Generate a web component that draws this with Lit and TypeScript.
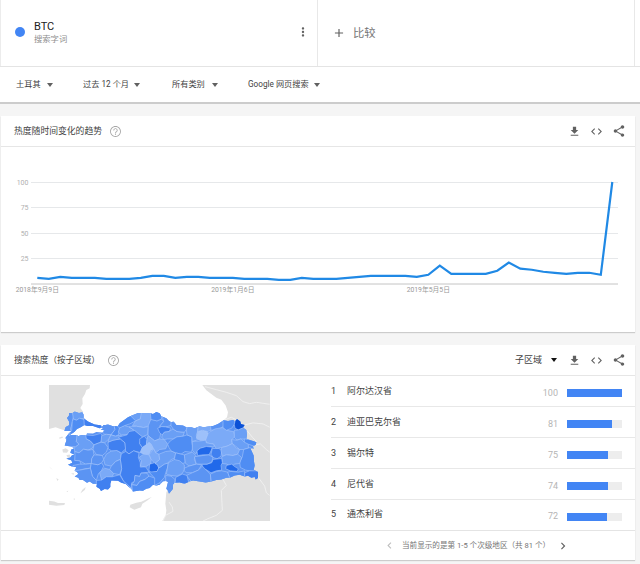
import { customElement, property } from "lit/decorators.js";
import { html, css, svg, LitElement } from "lit";

type Region = { name: string; value: number };
type Province = [fill: string, points: string];

const TREND: number[] = [
  6, 5, 7, 6, 6, 6, 5, 5, 5, 6, 8, 8, 6, 7, 7, 6, 6, 6, 5, 5, 5, 4, 4, 6, 5, 5, 5, 6, 7, 8, 8, 8, 8, 7, 9, 18, 10, 10,
  10, 10, 13, 21, 15, 14, 12, 11, 10, 11, 11, 9, 100,
];

const REGIONS: Region[] = [
  { name: "阿尔达汉省", value: 100 },
  { name: "迪亚巴克尔省", value: 81 },
  { name: "锡尔特", value: 75 },
  { name: "尼代省", value: 74 },
  { name: "通杰利省", value: 72 },
];

const ICONS = {
  download: "M19 9h-4V3H9v6H5l7 7 7-7zM5 18v2h14v-2H5z",
  code: "M9.4 16.6L4.8 12l4.6-4.6L8 6l-6 6 6 6 1.4-1.4zm5.2 0l4.6-4.6-4.6-4.6L16 6l6 6-6 6-1.4-1.4z",
  share:
    "M18 16.08c-.76 0-1.44.3-1.96.77L8.91 12.7c.05-.23.09-.46.09-.7s-.04-.47-.09-.7l7.05-4.11c.54.5 1.25.81 2.04.81 1.66 0 3-1.34 3-3s-1.34-3-3-3-3 1.34-3 3c0 .24.04.47.09.7L8.04 9.81C7.5 9.31 6.79 9 6 9c-1.66 0-3 1.34-3 3s1.34 3 3 3c.79 0 1.5-.31 2.04-.81l7.12 4.16c-.05.21-.08.43-.08.65 0 1.61 1.31 2.92 2.92 2.92s2.92-1.31 2.92-2.92-1.31-2.92-2.92-2.92z",
  help: "M11 18h2v-2h-2v2zm1-16C6.48 2 2 6.48 2 12s4.48 10 10 10 10-4.48 10-10S17.52 2 12 2zm0 18.4c-4.6 0-8.4-3.8-8.4-8.4S7.4 3.6 12 3.6s8.4 3.8 8.4 8.4-3.8 8.4-8.4 8.4zm0-14.4c-2.21 0-4 1.79-4 4h1.6c0-1.3 1.1-2.4 2.4-2.4s2.4 1.1 2.4 2.4c0 2-3.2 1.75-3.2 5h1.6c0-2.25 3.2-2.5 3.2-5 0-2.21-1.79-4-4-4z",
  more: "M12 8c1.1 0 2-.9 2-2s-.9-2-2-2-2 .9-2 2 .9 2 2 2zm0 2c-1.1 0-2 .9-2 2s.9 2 2 2 2-.9 2-2-.9-2-2-2zm0 6c-1.1 0-2 .9-2 2s.9 2 2 2 2-.9 2-2-.9-2-2-2z",
  add: "M19 13h-6v6h-2v-6H5v-2h6V5h2v6h6v2z",
  left: "M15.41 7.41L14 6l-6 6 6 6 1.41-1.41L10.83 12z",
  right: "M10 6L8.59 7.41 13.17 12l-4.58 4.59L10 18l6-6z",
};

const COUNTRY =
  "M190 150L205 147 218 151 235 152 240 143 265 125 280 118 295 112 315 112 330 112 340 115 350 109 360 113 365 122 380 128 388 136 395 140 402 138 410 148 420 149 430 150 440 155 455 155 465 158 480 152 492 155 505 153 520 151 535 145 552 134 565 136 580 133 586 137 592 130 602 138 604 145 615 148 610 156 620 163 622 178 620 190 635 195 650 200 648 208 640 212 643 220 632 218 642 240 643 258 645 270 642 283 655 290 655 308 648 312 645 305 635 307 625 301 615 303 600 298 585 300 572 306 560 307 545 312 530 314 515 318 498 321 480 318 460 315 448 319 435 325 420 321 405 322 400 327 400 340 388 355 385 346 380 340 385 320 379 317 370 318 360 328 350 330 340 328 330 338 320 340 310 346 300 345 280 348 275 340 268 335 258 326 245 322 235 316 215 315 212 325 212 335 205 342 195 341 184 347 180 340 170 334 172 325 160 325 150 318 142 322 130 314 120 314 116 307 105 303 116 296 112 290 105 286 110 275 95 272 85 268 98 262 95 254 80 250 92 246 97 239 105 238 92 232 95 222 105 218 95 213 75 210 80 196 80 185 95 178 112 178 115 182 125 178 140 179 142 173 160 174 170 169 188 171 195 165 183 162 190 159ZM88 112L98 113 105 108 118 112 128 110 133 120 132 128 145 138 165 147 182 149 192 155 180 158 160 151 143 151 134 148 123 155 112 160 104 169 90 178 76 190 88 173 96 166 74 166 78 154 88 149 88 138 82 127 88 120Z";

const PALE = "#9dc0fa";
const LIGHT = "#7baaf7";
const SOFT = "#6a9ff5";
const MID = "#5b94f3";
const BASE = "#4f8df3";
const STRONG = "#4080f0";
const DEEP = "#2169ea";
const TOP = "#0b51d6";

const PROVINCES: Province[] = [
  [MID, "70,105 98,108 102,122 98,138 95,152 92,160 96,170 70,195"],
  [SOFT, "98,105 138,105 134,130 120,128 110,134 101,130"],
  [BASE, "98,138 101,130 110,134 120,128 134,132 137,155 70,195 96,165"],
  [STRONG, "132,115 200,145 190,162 134,153"],
  [MID, "70,175 112,176 114,188 110,198 118,206 108,214 70,215"],
  [SOFT, "112,176 142,178 140,190 152,196 163,208 158,218 145,224 132,221 118,232 104,228 95,215 108,214 118,206 110,198"],
  [STRONG, "138,178 160,180 182,174 188,180 184,200 172,204 163,208 152,196 140,190"],
  [MID, "190,140 222,145 226,162 214,178 195,176 182,164"],
  [BASE, "222,145 240,145 241,162 236,178 228,182 214,178 226,162"],
  [SOFT, "186,180 200,176 214,178 208,190 195,202 184,200"],
  [MID, "163,208 184,200 195,202 205,216 200,230 188,240 170,237 160,222"],
  [MID, "104,228 118,232 132,221 145,224 160,222 163,238 156,250 155,264 138,266 120,256 105,255"],
  [BASE, "70,212 104,216 106,238 105,255 120,256 125,268 95,275 70,275"],
  [MID, "100,270 120,266 138,266 155,264 152,278 135,280 120,284 100,290"],
  [BASE, "155,264 175,268 186,262 192,272 185,286 176,295 170,315 158,302 152,278"],
  [MID, "95,286 120,284 152,278 158,302 170,315 175,335 100,330"],
  [MID, "163,238 188,240 192,252 186,262 175,268 155,264 156,250"],
  [SOFT, "192,252 200,236 216,226 232,225 245,234 242,252 228,258 215,272 196,268"],
  [STRONG, "205,200 220,194 242,190 256,202 258,220 245,232 232,225 216,226 206,220"],
  [SOFT, "214,178 228,182 245,178 242,190 220,194 205,200 208,190"],
  [SOFT, "240,155 255,150 268,154 285,165 264,177 245,178 236,170"],
  [BASE, "230,150 245,133 270,118 290,122 288,136 270,145 255,150 240,157"],
  [SOFT, "270,118 290,108 310,110 302,130 288,136"],
  [LIGHT, "288,136 302,130 305,110 334,108 338,132 330,150 312,156 290,152 278,150"],
  [SOFT, "268,154 290,152 312,156 326,153 324,177 308,184 285,165"],
  [STRONG, "236,185 262,178 268,168 285,165 308,184 304,192 300,204 308,216 302,231 282,226 268,235 258,228 256,202 242,190"],
  [STRONG, "245,235 258,228 268,235 282,226 298,232 296,246 302,262 302,275 318,274 328,290 304,293 300,303 286,300 284,318 276,322 274,338 252,318 242,298 246,280 242,252"],
  [LIGHT, "180,292 194,278 210,282 222,294 218,304 200,304 186,314"],
  [MID, "210,282 215,272 228,258 242,252 246,280 240,298 222,294"],
  [STRONG, "170,315 186,314 200,304 218,304 240,298 252,318 274,338 284,355 170,355"],
  [MID, "284,318 286,300 300,303 304,293 322,293 328,302 316,312 300,318 292,330 276,328"],
  [BASE, "276,328 292,330 300,318 316,312 328,302 345,308 360,320 365,340 280,358"],
  [MID, "326,150 334,130 352,136 366,130 372,138 360,152 364,168 360,190 345,196 325,180"],
  [STRONG, "300,190 314,182 322,192 320,208 308,216 300,204"],
  [PALE, "308,216 320,208 328,200 335,206 342,220 333,226 328,238 312,236 302,231"],
  [LIGHT, "325,180 345,196 360,190 374,192 384,206 378,220 360,222 348,232 342,220 335,206 328,200 320,208 322,192"],
  [LIGHT, "328,238 342,220 348,232 358,236 360,252 346,264 334,252"],
  [LIGHT, "298,246 312,236 328,238 334,252 334,264 318,274 302,272 306,256"],
  [DEEP, "330,266 344,262 354,268 357,278 352,288 334,292 328,284"],
  [BASE, "328,290 352,288 357,278 374,266 386,262 384,276 378,292 374,306 360,322 345,330 345,308"],
  [SOFT, "358,236 378,228 394,226 408,232 406,246 390,256 386,262 374,266 357,278 354,268 346,264 360,252"],
  [BASE, "334,132 332,112 350,104 366,116 366,130 352,136"],
  [MID, "366,114 398,136 394,150 378,154 360,152 372,138"],
  [STRONG, "354,158 366,153 378,154 394,158 388,168 374,170 368,178 360,172"],
  [SOFT, "368,178 374,170 388,168 400,160 412,168 434,170 430,182 412,184 400,190 384,190 374,192 366,186"],
  [BASE, "384,206 392,196 412,184 430,182 442,178 458,184 456,198 460,218 454,230 436,228 424,236 408,232 394,226 388,216"],
  [MID, "394,136 418,145 444,148 440,162 434,170 412,168 400,160 394,150"],
  [SOFT, "444,150 476,150 474,166 470,180 476,192 458,198 456,184 442,178 440,162"],
  [PALE, "474,168 488,164 504,168 506,178 498,194 484,196 470,188"],
  [LIGHT, "476,148 515,148 514,164 504,168 488,164 474,168"],
  [MID, "512,145 555,132 552,152 536,162 514,164"],
  [LIGHT, "506,172 526,160 550,156 560,164 582,168 586,184 576,192 578,204 562,212 546,216 530,220 522,206 500,202 498,194"],
  [SOFT, "458,198 484,196 498,194 500,202 522,206 524,214 508,214 490,216 476,222 468,236 458,224"],
  [BASE, "550,128 586,130 584,146 576,158 560,164 550,156"],
  [TOP, "584,146 588,128 598,130 620,148 610,158 596,163 586,158"],
  [SOFT, "584,164 596,163 612,156 628,163 622,192 604,190 592,194 584,186"],
  [SOFT, "576,192 592,194 604,190 614,200 626,202 626,218 612,222 600,222 588,212 578,204"],
  [BASE, "614,190 655,196 650,214 626,206 614,200"],
  [BASE, "612,222 632,216 645,232 650,290 618,284 602,276 600,260 608,244"],
  [DEEP, "472,226 482,218 500,213 518,215 514,226 508,238 490,238 474,240"],
  [STRONG, "518,219 538,219 546,226 544,242 532,250 520,246 514,236"],
  [LIGHT, "546,216 562,212 578,204 590,218 600,222 594,236 580,240 560,238 548,242 544,226"],
  [SOFT, "560,238 580,240 594,236 606,246 600,264 584,266 574,276 562,266 548,264 546,244"],
  [DEEP, "486,266 502,266 516,262 520,252 546,249 548,262 544,270 546,284 530,286 514,292 502,284 492,280"],
  [DEEP, "560,270 576,266 586,274 596,280 592,288 572,286 558,280"],
  [SOFT, "434,238 458,230 468,240 464,252 470,266 448,272 436,262"],
  [MID, "464,244 490,240 508,238 520,246 516,260 502,266 486,266 470,266"],
  [BASE, "408,232 424,236 434,238 436,262 420,266 404,252"],
  [SOFT, "386,262 404,252 420,256 434,268 434,282 428,294 412,302 394,300 380,296"],
  [MID, "434,278 448,272 470,266 486,268 476,284 458,292 440,292 434,286"],
  [MID, "440,300 458,292 476,284 488,272 502,286 512,296 515,325 460,325"],
  [STRONG, "408,306 428,296 442,300 448,325 406,326"],
  [MID, "512,296 530,288 546,286 564,290 572,310 515,322"],
  [BASE, "564,290 574,288 596,290 615,286 615,308 572,312"],
  [STRONG, "615,292 630,286 662,286 662,315 615,308"],
  [MID, "378,300 394,302 406,312 402,345 385,358 378,340"],
];

const GRID_LINES = [
  { value: 100, y: 35.5 },
  { value: 75, y: 60.5 },
  { value: 50, y: 86.5 },
  { value: 25, y: 111.5 },
];

const icon = (path: string, size: number, cls = "") =>
  html`<svg class="icon ${cls}" width=${size} height=${size} viewBox="0 0 24 24"><path d=${path}></path></svg>`;

@customElement("trend-chart")
export class TrendChart extends LitElement {
  @property({ attribute: false })
  values: number[] = [];

  static styles = [
    css`
      :host,
      svg {
        display: block;
      }

      text {
        fill: #b0b0b0;
        font: 7px Roboto, "Noto Sans CJK SC", sans-serif;
      }

      .date {
        fill: #999;
        font-size: 6.8px;
      }

      .grid {
        stroke: #e6e8ea;
      }

      .axis {
        stroke: #c4c4c4;
      }

      .line {
        fill: none;
        stroke: #2089e5;
        stroke-width: 2.2;
      }
    `,
  ];

  render() {
    const points = this.values.map((v, i) => `${36.3 + i * 11.5},${137 - v * 1.02}`).join(" ");

    return html`
      <svg width="634" height="185" viewBox="0 0 634 185">
        ${GRID_LINES.map(
          ({ value, y }) => svg`
            <line class="grid" x1="30" x2="617" y1=${y} y2=${y}></line>
            <text x="27.5" y=${y + 2.5} text-anchor="end">${value}</text>
          `
        )}
        <line class="axis" x1="30" x2="617" y1="137" y2="137"></line>
        ${["2018年9月9日", "2019年1月6日", "2019年5月5日"].map(
          (d, i) => svg`<text class="date" x=${36.3 + i * 195.5} y="144.5" text-anchor="middle">${d}</text>`
        )}
        <polyline class="line" points=${points}></polyline>
      </svg>
    `;
  }
}

@customElement("region-map")
export class RegionMap extends LitElement {
  static styles = [
    css`
      :host,
      svg {
        display: block;
      }

      .land {
        fill: #e0e0e0;
      }

      .border {
        fill: none;
        stroke: #f2f2f2;
        stroke-width: 2.5;
      }

      .province {
        stroke: #a9c8fb;
        stroke-width: 1.7;
        stroke-linejoin: round;
      }
    `,
  ];

  render() {
    return html`
      <svg width="221" height="136" viewBox="28 28 663 409" preserveAspectRatio="none">
        <defs>
          <clipPath id="country"><path d=${COUNTRY}></path></clipPath>
        </defs>
        <path
          class="land"
          d="M28 28H151L150 38 140 43 136 55 128 68 129 85 122 97 131 109 105 118 88 125 88 148 75 164 62 160 48 155 28 160Z
            M488 28H691V437H368L378 420 380 405 377 385 380 350 400 325 590 290 590 200 552 134 562 125 565 110 558 90 545 72 530 66 515 55 500 44Z"
        ></path>
        <!-- islands -->
        <path
          class="land"
          d="M28 376L44 378 55 383 76 383 74 389 50 391 28 388ZM270 396L272 388 290 382 305 379 337 364 322 376 308 385 304 396 284 403Z
            M122 354L128 343 138 335 136 343ZM68 222L78 218 87 224 82 232 70 231ZM80 239L90 237 92 244 86 249ZM58 187L68 183 70 187 60 190Z
            M28 272L33 278 40 284 35 279ZM50 308L57 312 53 317ZM94 295L102 293 103 298ZM100 371L106 369 106 373ZM80 349L86 345 84 350Z"
        ></path>
        <path
          class="border"
          d="M496 33L530 42 560 50 590 60 610 78 630 84 650 80 690 86M552 134L575 125 600 138M615 148L640 142 670 145 690 155M622 165L638 185 652 200
            M648 208L662 205 680 222 690 230M645 285L655 305 675 332 680 352 690 360M550 312L560 330 545 345 548 405 530 420 505 430 490 437
            M370 437L378 420 400 408 398 395 388 380"
        ></path>
        <path d=${COUNTRY} fill=${MID}></path>
        <g clip-path="url(#country)">
          ${PROVINCES.map(([fill, points]) => svg`<polygon class="province" fill=${fill} points=${points}></polygon>`)}
        </g>
      </svg>
    `;
  }
}

@customElement("app-root")
export class AppRoot extends LitElement {
  static styles = [
    css`
      * {
        box-sizing: border-box;
      }

      :host {
        display: block;
        width: 640px;
        height: 564px;
        overflow: hidden;
        background: #f5f5f5;
        color: #424242;
        font-family: Roboto, "Noto Sans CJK SC", sans-serif;
        font-size: 9px;
        line-height: 1.2;
      }

      .icon {
        display: block;
        flex: none;
        fill: #616161;
      }

      .icon.muted {
        fill: #a6a6a6;
      }

      .icon.off {
        fill: #bdbdbd;
      }

      .explore {
        background: #fff;
        border-bottom: 2px solid #ccc;
        height: 104px;
      }

      .terms {
        display: grid;
        grid-template-columns: 317px 317px;
        height: 67px;
        padding-left: 1px;
        border-bottom: 1px solid #e4e4e4;
      }

      .term {
        display: flex;
        align-items: center;
        border-right: 1px solid #e8e8e8;
        padding: 0 7px 2px 14px;
      }

      .term:first-child {
        box-shadow: -1px 0 #ececec;
      }

      .dot {
        width: 10px;
        height: 10px;
        margin-right: 9px;
        border-radius: 50%;
        background: #4285f4;
      }

      .name {
        flex: 1;
        color: #212121;
        font-size: 11px;
        line-height: 13px;
      }

      .kind {
        color: #8e8e8e;
        font-size: 8.3px;
        line-height: 12px;
      }

      .term.compare {
        gap: 7px;
        padding-bottom: 1px;
        color: #757575;
        font-size: 11.3px;
      }

      .compare span {
        padding-top: 2px;
      }

      .filters {
        display: flex;
        align-items: center;
        height: 35px;
        padding-left: 16px;
        font-size: 8.2px;
      }

      .filter {
        display: flex;
        align-items: center;
        justify-content: space-between;
      }

      .arrow {
        border: 3px solid transparent;
        border-top: 4px solid #616161;
        border-bottom: 0;
      }

      .arrow.black {
        border-top-color: #111;
        margin: 0 10px 0 9px;
      }

      .card {
        width: 634px;
        margin: 12px 0 0 1px;
        background: #fff;
        box-shadow: 0 1px 1px #ccc;
      }

      .card.trend {
        height: 216px;
      }

      .card.regions {
        height: 215px;
        margin-top: 13px;
      }

      .head {
        display: flex;
        align-items: center;
        height: 31px;
        padding: 0 9.5px 0 13px;
        border-bottom: 1px solid #e6e6e6;
        gap: 7px;
      }

      .title {
        font-size: 8.8px;
      }

      .regions .title {
        font-size: 8.6px;
      }

      .tools {
        display: flex;
        align-items: center;
        gap: 9px;
        margin-left: auto;
      }

      .tools .icon:last-child {
        margin-left: -0.5px;
      }

      .scope {
        display: flex;
        align-items: center;
        font-size: 9px;
        margin-right: -8px;
      }

      .body {
        display: grid;
        grid-template-columns: 330px 1fr;
        height: 154px;
      }

      region-map {
        padding: 9px 0 0 48px;
      }

      .row {
        display: flex;
        align-items: center;
        height: 31px;
        padding-right: 13px;
        border-bottom: 1px solid #e8e8e8;
      }

      .row:last-child {
        height: 30px;
        border-bottom-color: transparent;
      }

      .rank {
        width: 16px;
      }

      .region {
        flex: 1;
      }

      .value {
        margin-right: 9px;
        padding-top: 4px;
        color: #b5b5b5;
        font-size: 9px;
      }

      .track {
        width: 55px;
        height: 8px;
        margin-top: 4px;
        background: #ededed;
      }

      .bar {
        height: 8px;
        background: #4285f4;
      }

      .pager {
        display: flex;
        align-items: center;
        gap: 6px;
        height: 30px;
        padding-left: 382px;
        border-top: 1px solid #e4e4e4;
        color: #757575;
        font-size: 7.6px;
      }
    `,
  ];

  render() {
    return html`
      <header class="explore">
        <div class="terms">
          <div class="term">
            <span class="dot"></span>
            <div class="name">
              BTC
              <div class="kind">搜索字词</div>
            </div>
            ${icon(ICONS.more, 14)}
          </div>
          <div class="term compare">${icon(ICONS.add, 14)} <span>比较</span></div>
        </div>
        <nav class="filters">
          ${this._filter("土耳其", 37, 30)} ${this._filter("过去 12 个月", 57, 32)} ${this._filter("所有类别", 46, 30)}
          ${this._filter("Google 网页搜索", 72, 0)}
        </nav>
      </header>
      <section class="card trend">
        <div class="head">
          <span class="title">热度随时间变化的趋势</span>
          ${icon(ICONS.help, 13, "muted")} ${this._tools()}
        </div>
        <trend-chart .values=${TREND}></trend-chart>
      </section>
      <section class="card regions">
        <div class="head">
          <span class="title">搜索热度（按子区域）</span>
          ${icon(ICONS.help, 13, "muted")}
          ${this._tools(html`<span class="scope">子区域<span class="arrow black"></span></span>`)}
        </div>
        <div class="body">
          <region-map></region-map>
          <div>${REGIONS.map((r, i) => this._row(r, i))}</div>
        </div>
        <div class="pager">
          ${icon(ICONS.left, 13, "off")}
          <span>当前显示的是第 1-5 个次级地区（共 81 个）</span>
          ${icon(ICONS.right, 14)}
        </div>
      </section>
    `;
  }

  private _filter(label: string, width: number, gap: number) {
    return html`
      <span class="filter" style="width: ${width}px; margin-right: ${gap}px">${label}<span class="arrow"></span></span>
    `;
  }

  private _tools(before: unknown = "") {
    return html`
      <div class="tools">${before} ${icon(ICONS.download, 13)} ${icon(ICONS.code, 13)} ${icon(ICONS.share, 14)}</div>
    `;
  }

  private _row(region: Region, index: number) {
    return html`
      <div class="row">
        <span class="rank">${index + 1}</span>
        <span class="region">${region.name}</span>
        <span class="value">${region.value}</span>
        <div class="track"><div class="bar" style="width: ${region.value}%"></div></div>
      </div>
    `;
  }
}

declare global {
  interface HTMLElementTagNameMap {
    "app-root": AppRoot;
    "region-map": RegionMap;
    "trend-chart": TrendChart;
  }
}
